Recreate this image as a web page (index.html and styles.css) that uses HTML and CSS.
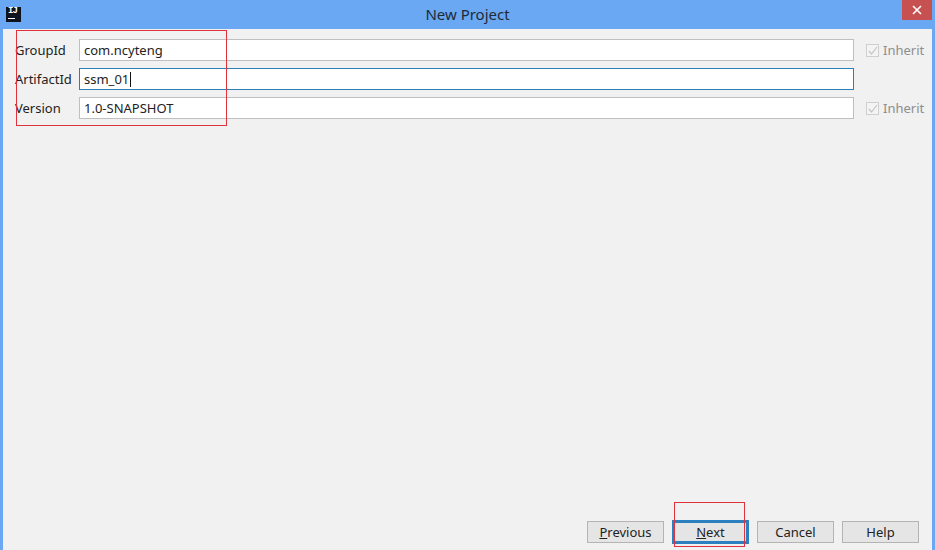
FILE: index.html
```html
<!DOCTYPE html>
<html lang="en">
<head>
    <meta charset="UTF-8">
    <meta name="viewport" content="width=device-width, initial-scale=1.0">
    <title>New Project</title>
    <link rel="stylesheet" href="styles.css">
</head>
<body>
    <div class="window">
        <div class="titlebar">
            <div class="app-icon"><span class="app-icon-text">IJ</span><span class="app-icon-line"></span></div>
            <div class="title">New Project</div>
            <div class="close">
                <svg width="10" height="10" viewBox="0 0 10 10"><path d="M1 1 L9 9 M9 1 L1 9" stroke="#fff" stroke-width="1.6" fill="none"/></svg>
            </div>
        </div>
        <div class="dialog">
            <div class="form">
                <label class="label">GroupId</label>
                <div class="input">com.ncyteng</div>
                <div class="inherit">
                    <span class="check"><svg width="13" height="13" viewBox="0 0 13 13"><path d="M3 7 L5.5 10 L11 3" stroke="#c4c4c4" stroke-width="1.2" fill="none"/></svg></span>
                    Inherit
                </div>

                <label class="label">ArtifactId</label>
                <div class="input focused">ssm_01<span class="caret"></span></div>
                <div></div>

                <label class="label">Version</label>
                <div class="input">1.0-SNAPSHOT</div>
                <div class="inherit">
                    <span class="check"><svg width="13" height="13" viewBox="0 0 13 13"><path d="M3 7 L5.5 10 L11 3" stroke="#c4c4c4" stroke-width="1.2" fill="none"/></svg></span>
                    Inherit
                </div>
            </div>
            <div class="footer">
                <button class="button"><u>P</u>revious</button>
                <button class="button default"><u>N</u>ext</button>
                <button class="button">Cancel</button>
                <button class="button">Help</button>
            </div>
        </div>
        <div class="mark mark-form"></div>
        <div class="mark mark-next"></div>
    </div>
</body>
</html>
```

FILE: styles.css
```css
html, body {
    margin: 0;
    padding: 0;
}
body {
    font-family: "Noto Sans", "Open Sans", sans-serif;
    font-size: 13px;
    color: #222;
}
.window {
    position: relative;
    width: 935px;
    height: 550px;
    display: flex;
    flex-direction: column;
    background-color: #6aa8f4;
    overflow: hidden;
}
.titlebar {
    position: relative;
    height: 29px;
    flex: none;
}
.app-icon {
    position: absolute;
    left: 6px;
    top: 7px;
    width: 15px;
    height: 15px;
    background-color: #0d1420;
    color: #fff;
}
.app-icon-text {
    display: block;
    font-family: "Liberation Mono", monospace;
    font-size: 9px;
    font-weight: bold;
    line-height: 9px;
    padding-left: 2px;
    letter-spacing: -1px;
}
.app-icon-line {
    display: block;
    width: 7px;
    height: 1px;
    margin: 2px 0 0 2px;
    background-color: #fff;
}
.title {
    text-align: center;
    font-size: 15px;
    line-height: 29px;
    color: #1f2a38;
}
.close {
    position: absolute;
    right: 3px;
    top: 0;
    width: 30px;
    height: 20px;
    background-color: #c75050;
    display: flex;
    align-items: center;
    justify-content: center;
}
.dialog {
    flex: 1;
    margin: 0 3px;
    background-color: #f1f1f1;
    display: flex;
    flex-direction: column;
    justify-content: space-between;
}
.form {
    display: grid;
    grid-template-columns: 64px 775px 1fr;
    grid-auto-rows: 22px;
    row-gap: 7px;
    padding: 10px 0 0 12px;
    align-items: center;
}
.label {
    line-height: 22px;
}
.input {
    box-sizing: border-box;
    height: 22px;
    line-height: 20px;
    padding-left: 4px;
    border: 1px solid #bfbfbf;
    background-color: #fff;
}
.input.focused {
    border-color: #2d7fb8;
}
.caret {
    display: inline-block;
    width: 1px;
    height: 15px;
    margin-left: 1px;
    background-color: #111;
    vertical-align: -3px;
}
.inherit {
    display: flex;
    align-items: center;
    gap: 4px;
    padding-left: 12px;
    color: #8e8e8e;
}
.check {
    box-sizing: border-box;
    width: 13px;
    height: 13px;
    border: 1px solid #cfcfcf;
    background-color: #f4f4f4;
    display: block;
    line-height: 0;
}
.check svg {
    margin: -1px;
}
.footer {
    display: flex;
    justify-content: flex-end;
    align-items: center;
    gap: 8px;
    padding: 0 13px 6px 0;
}
.button {
    box-sizing: border-box;
    width: 77px;
    height: 22px;
    padding: 0;
    font-family: inherit;
    font-size: 13px;
    color: #222;
    border: 1px solid #b4b4b4;
    background-color: #e5e5e5;
}
.button.default {
    height: 24px;
    border: 3px solid #2b80c0;
}
.mark {
    position: absolute;
    box-sizing: border-box;
    border: 1px solid #e0323c;
}
.mark-form {
    left: 16px;
    top: 30px;
    width: 211px;
    height: 96px;
}
.mark-next {
    left: 674px;
    top: 502px;
    width: 71px;
    height: 45px;
}
```
